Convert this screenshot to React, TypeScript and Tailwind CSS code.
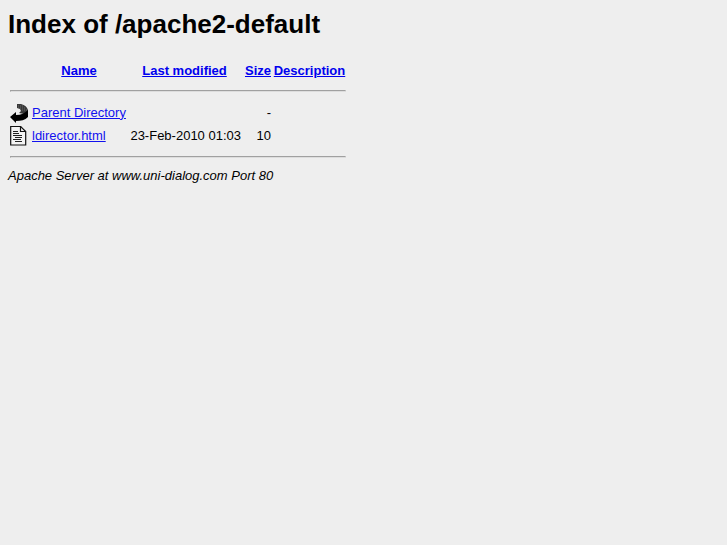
import React from "react";

const headLink = "text-[#0000ee] underline";
const link = "text-[#1111ee] underline";

function BackIcon() {
  return (
    <svg width="20" height="21" viewBox="0 0 20 21" role="img" aria-label="Parent directory" className="block">
      <path d="M7 2h4c4 1 6 3 7 6v2l-4 2-5-1 2-2-1-2-3-1z" fill="#383838" />
      <path d="M8 4h5M8 6h7M12 8h5" stroke="#8a8a8a" strokeWidth="0.6" strokeDasharray="1 1" />
      <path d="M0 15 6 10v3c5 0 9-2 12-5v7c-3 3-7 4-12 4v2z" fill="#000" />
    </svg>
  );
}

function TextIcon() {
  return (
    <svg width="20" height="21" viewBox="0 0 20 21" role="img" aria-label="Text file" className="block">
      <path d="M0.700 1.500h10l5 5v13.500h-15z" fill="#f4f4f4" stroke="#111" strokeWidth="1.2" />
      <path d="M10.500 1.500v5h5" fill="none" stroke="#111" strokeWidth="1.2" />
      <path d="M3 6.500h5M3 8.500h6M3 10.500h9M5 12.500h7M3 14.500h8M5 16.500h7" stroke="#222" strokeWidth="1.2" />
    </svg>
  );
}

function Rule() {
  return (
    <tr>
      <td colSpan={5} className="py-2">
        <hr className="h-0.5 border border-t-[#a0a0a0] border-l-[#a0a0a0] border-b-[#dddddd] border-r-[#dddddd]" />
      </td>
    </tr>
  );
}

export default function App() {
  return (
    <main className="min-h-screen bg-[#eeeeee] px-2 pt-2 font-['Liberation_Sans',Arial,sans-serif] text-[13px] leading-4 text-black">
      <h1 className="mb-5 text-[26px] leading-8 font-bold">Index of /apache2-default</h1>
      <table className="border-separate border-spacing-0.5">
        <thead>
          <tr className="h-[18px]">
            <th className="min-w-5"></th>
            <th className="min-w-[94px]"><a href="#name" className={headLink}>Name</a></th>
            <th className="min-w-[113px]"><a href="#modified" className={headLink}>Last modified</a></th>
            <th className="min-w-7 text-right"><a href="#size" className={headLink}>Size</a></th>
            <th className="min-w-[73px]"><a href="#description" className={headLink}>Description</a></th>
          </tr>
        </thead>
        <tbody>
          <Rule />
          <tr>
            <td><BackIcon /></td>
            <td><a href="#parent" className={link}>Parent Directory</a></td>
            <td></td>
            <td className="text-right">-</td>
            <td></td>
          </tr>
          <tr>
            <td><TextIcon /></td>
            <td><a href="#ldirector" className={link}>ldirector.html</a></td>
            <td className="text-right">23-Feb-2010 01:03</td>
            <td className="text-right">10</td>
            <td></td>
          </tr>
          <Rule />
        </tbody>
      </table>
      <address className="italic">Apache Server at www.uni-dialog.com Port 80</address>
    </main>
  );
}
